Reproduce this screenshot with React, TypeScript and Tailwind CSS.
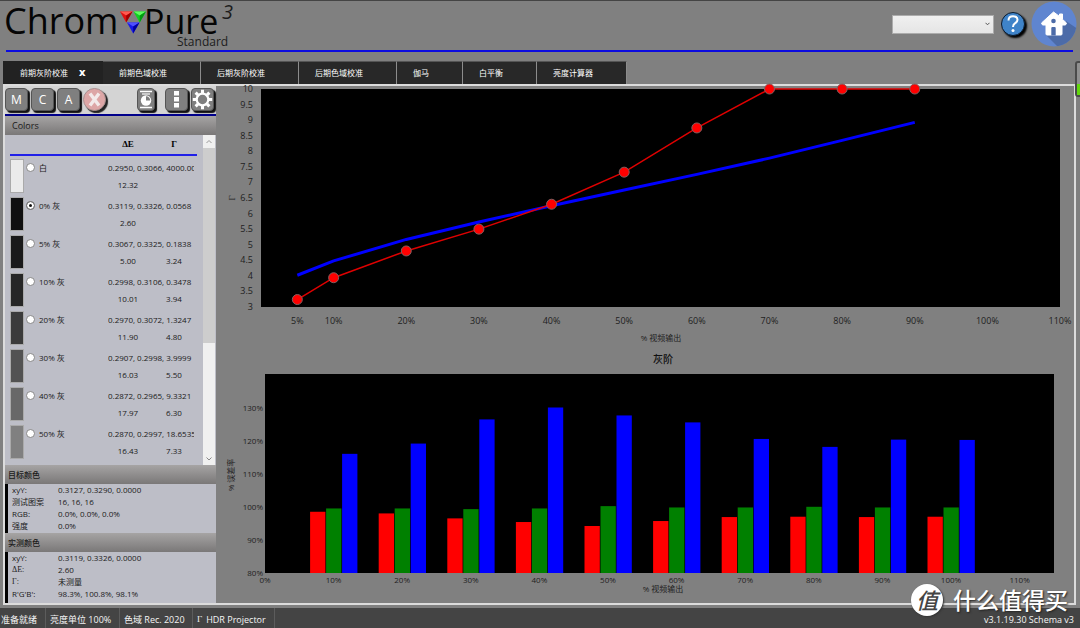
import type { ReactNode } from "react";

const tabs = ["前期色域校准", "后期灰阶校准", "后期色域校准", "伽马", "白平衡", "亮度计算器"];

const readings = [
  { name: "白", swatch: "#ebebeb", xyY: "0.2950, 0.3066, 4000.0000", de: "12.32", gamma: "" },
  { name: "0% 灰", swatch: "#101010", xyY: "0.3119, 0.3326, 0.0568", de: "2.60", gamma: "" },
  { name: "5% 灰", swatch: "#1a1a1a", xyY: "0.3067, 0.3325, 0.1838", de: "5.00", gamma: "3.24" },
  { name: "10% 灰", swatch: "#262626", xyY: "0.2998, 0.3106, 0.3478", de: "10.01", gamma: "3.94" },
  { name: "20% 灰", swatch: "#3b3b3b", xyY: "0.2970, 0.3072, 1.3247", de: "11.90", gamma: "4.80" },
  { name: "30% 灰", swatch: "#525252", xyY: "0.2907, 0.2998, 3.9999", de: "16.03", gamma: "5.50" },
  { name: "40% 灰", swatch: "#686868", xyY: "0.2872, 0.2965, 9.3321", de: "17.97", gamma: "6.30" },
  { name: "50% 灰", swatch: "#808080", xyY: "0.2870, 0.2997, 18.6535", de: "16.43", gamma: "7.33" },
];

const target: [string, string][] = [
  ["xyY:", "0.3127, 0.3290, 0.0000"],
  ["测试图案", "16, 16, 16"],
  ["RGB:", "0.0%, 0.0%, 0.0%"],
  ["强度", "0.0%"],
];

const measured: [string, string][] = [
  ["xyY:", "0.3119, 0.3326, 0.0000"],
  ["ΔE:", "2.60"],
  ["Γ:", "未测量"],
  ["R'G'B':", "98.3%, 100.8%, 98.1%"],
];

const levels = [5, 10, 20, 30, 40, 50, 60, 70, 80, 90];
const measuredGamma = [3.24, 3.94, 4.8, 5.5, 6.3, 7.33, 8.75, 10, 10, 10];
const targetGamma = [4.02, 4.48, 5.17, 5.73, 6.25, 6.76, 7.26, 7.78, 8.35, 8.93];

const balance = [
  [98.5, 99.5, 116],
  [98, 99.5, 119.1],
  [96.5, 99.3, 126.4],
  [95.4, 99.5, 130],
  [94.2, 100.2, 127.6],
  [95.7, 99.8, 125.5],
  [96.9, 99.8, 120.5],
  [97, 100, 118.1],
  [96.9, 99.8, 120.3],
  [97, 99.8, 120.2],
];

const barColors = ["#ff0000", "#008000", "#0000ff"];

function Logo() {
  return (
    <svg className="overflow-visible" width="240" height="49" viewBox="0 0 240 49" role="img" aria-label="ChromaPure 3 Standard">
      <g className="font-['Open_Sans',sans-serif]" fill="#050505">
        <text x="2" y="33" fontSize="36">Chrom</text>
        <text x="142" y="33" fontSize="34">Pure</text>
        <text x="220" y="18" fontSize="20" fontStyle="italic" fill="#1c1c1c">3</text>
        <text x="175" y="45" fontSize="12" fill="#1c1c1c">Standard</text>
      </g>
      <path d="M118 10.500h12.500l-6.300 11z" fill="#e01010" />
      <path d="M118 10.500h12.500l-6.300 4z" fill="#ff5a50" />
      <path d="M130.500 10.500l-6.300 11v-7z" fill="#a00000" />
      <path d="M131.500 10.500h12.500l-6.300 11z" fill="#10d020" />
      <path d="M131.500 10.500h12.500l-6.300 4z" fill="#60ff60" />
      <path d="M144 10.500l-6.300 11v-7z" fill="#009a10" />
      <path d="M125 21.500h12.500l-6.300 11z" fill="#1818e8" />
      <path d="M125 21.500h12.500l-6.300 4z" fill="#5050ff" />
      <path d="M137.500 21.500l-6.300 11v-7z" fill="#0000a0" />
    </svg>
  );
}

function HomeIcon() {
  return (
    <svg width="46" height="46" viewBox="0 0 46 46" aria-hidden="true">
      <defs>
        <clipPath id="home-disc">
          <circle cx="23" cy="23" r="22.500" />
        </clipPath>
      </defs>
      <circle cx="23" cy="23" r="22.500" fill="#5f85d0" />
      <path clipPath="url(#home-disc)" d="M15 34l14 14h22V31L35 20z" fill="#4c6ba8" />
      <path
        d="M22.500 11L10.500 22l1 2H15v9q0 1 1 1h14q1 0 1-1v-9h3.500l1-2-4-3.600v-5.400h-3v2.400z"
        fill="#fff"
        stroke="#fff"
        strokeLinejoin="round"
      />
      <circle cx="22.500" cy="20" r="2.300" fill="#4c6ba8" />
      <path d="M20.300 34.500V27q0-1 1-1h2.400q1 0 1 1v7.500z" fill="#4c6ba8" />
    </svg>
  );
}

function Header() {
  return (
    <header className="mr-[7px] ml-[6px] flex h-[51px] items-start justify-between border-b-2 border-[#0b0be0]">
      <div className="-ml-1">
        <Logo />
      </div>
      <div className="-mr-1 flex items-center">
        <div className="relative mr-[7px]">
          <select
            aria-label="Device"
            className="block h-[19px] w-[102px] appearance-none border border-[#acacac] bg-linear-to-b from-[#f0f0f0] to-[#e5e5e5] text-[8px]"
          >
            <option></option>
          </select>
          <svg className="pointer-events-none absolute top-[7px] right-1" width="5" height="4" viewBox="0 0 5 4" aria-hidden="true">
            <path d="M.5.800l2 2 2-2" fill="none" stroke="#555" />
          </svg>
        </div>
        <button
          aria-label="Help"
          className="mr-[6px] flex size-6 items-center justify-center rounded-full border border-[#0d1a2a] bg-[#3f83c8] shadow-[2px_2px_2px_#000]"
        >
          <svg width="22" height="22" viewBox="0 0 22 22" aria-hidden="true">
            <path d="M6.500 7.500q0-4.300 4.500-4.300t4.500 3.600q0 2-2.300 3.400-2.200 1.300-2.200 3.800" fill="none" stroke="#fff" strokeWidth="2" />
            <circle cx="11" cy="17.500" r="1.500" fill="#fff" />
          </svg>
        </button>
        <button aria-label="Home">
          <HomeIcon />
        </button>
      </div>
    </header>
  );
}

function Tabs() {
  return (
    <nav role="tablist" className="mt-[9px] ml-[3px] flex h-[23px] text-[8px] text-white">
      <button role="tab" aria-selected="true" className="flex w-[100px] items-center bg-[#222] pl-[17px] text-left">
        前期灰阶校准
        <span className="ml-[11px] text-[9px] font-extrabold">X</span>
      </button>
      {tabs.map((tab) => (
        <button
          key={tab}
          role="tab"
          aria-selected="false"
          className="border-t border-r border-t-[#555] border-r-[#8c8c8c] bg-[#282828] pr-[33px] pl-4 text-left"
        >
          {tab}
        </button>
      ))}
    </nav>
  );
}

function ToolButton({ label, className = "w-[23px]", children }: { label: string; className?: string; children: ReactNode }) {
  return (
    <button
      aria-label={label}
      className={`flex h-[23px] items-center justify-center rounded-[4px] border border-[#555] bg-[#7f7f7f] text-[12px] font-medium text-white shadow-[2px_2px_1px_#111] ${className}`}
    >
      {children}
    </button>
  );
}

function Toolbar() {
  return (
    <div className="flex h-[30px] items-start gap-[3px] border-b-2 border-[#00008b] bg-[#d4d4d4] pt-[2px]">
      <ToolButton label="Manual">M</ToolButton>
      <ToolButton label="Continuous">C</ToolButton>
      <ToolButton label="Auto">A</ToolButton>
      <button
        aria-label="Cancel"
        className="flex size-[23px] items-center justify-center rounded-full border border-[#a89090] bg-[#dda6a6] shadow-[2px_2px_1px_#222]"
      >
        <svg width="15" height="15" viewBox="0 0 15 15" aria-hidden="true">
          <path d="M3 1.500l9 12M12 1.500l-9 12" stroke="#f3eaea" strokeWidth="3.400" />
        </svg>
      </button>
      <div className="flex-1" />
      <ToolButton label="Report" className="mr-[7px] w-[18px]">
        <svg width="16" height="21" viewBox="0 0 16 21" aria-hidden="true">
          <path d="M2 2.500h12M2 18.500h12" stroke="#fff" strokeWidth="1.600" />
          <path d="M4 5h8" stroke="#fff" strokeWidth="1.200" />
          <circle cx="8" cy="11.500" r="5.200" fill="#fff" />
          <path d="M8 11.500V7.300a4.200 4.200 0 0 1 4.200 4.200z" fill="#7f7f7f" />
        </svg>
      </ToolButton>
      <ToolButton label="Options">
        <svg width="5" height="17" viewBox="0 0 5 17" fill="#fff" aria-hidden="true">
          <rect width="5" height="4.500" />
          <rect y="6" width="5" height="4.500" />
          <rect y="12" width="5" height="4.500" />
        </svg>
      </ToolButton>
      <ToolButton label="Settings" className="mr-[2px] w-[23px]">
        <svg width="21" height="21" viewBox="0 0 21 21" fill="none" stroke="#fff" aria-hidden="true">
          <circle cx="10.500" cy="10.500" r="5.800" strokeWidth="2.200" />
          <path
            d="M10.500 4V.800M10.500 17v3.200M4 10.500H.800M17 10.500h3.200M5.900 5.900L3.600 3.600M15.100 15.100l2.300 2.300M15.100 5.900l2.300-2.300M5.900 15.100l-2.300 2.300"
            strokeWidth="3"
          />
        </svg>
      </ToolButton>
    </div>
  );
}

function SectionTitle({ className, children }: { className: string; children: ReactNode }) {
  return (
    <h2 className={`flex h-[19px] items-center bg-linear-to-b from-[#a6a4a4] to-[#7a7878] text-[#1a1a1a] ${className}`}>
      {children}
    </h2>
  );
}

function ReadingsTable() {
  return (
    <div className="flex h-[330px] justify-between bg-[#bdbec7]">
      <table className="ml-[5px] h-fit w-[187px] table-fixed border-collapse text-[8px] text-[#1a1a1a]">
        <colgroup>
          <col className="w-4" />
          <col />
          <col className="w-[46px]" />
          <col className="w-[46px]" />
        </colgroup>
        <thead className="font-['Liberation_Serif',serif] text-[9px] text-black">
          <tr className="h-[20px] border-b-2 border-[#2020e8]">
            <th colSpan={2}></th>
            <th>ΔE</th>
            <th>Γ</th>
          </tr>
          <tr className="h-[3px]"></tr>
        </thead>
        {readings.map((r, i) => (
          <tbody key={r.name}>
            <tr className="h-[19px]">
              <td rowSpan={2} className="pt-px align-top">
                <div className="h-[34px] w-[14px] border border-[#aaa]" style={{ backgroundColor: r.swatch }} />
              </td>
              <td>
                <label className="flex items-center gap-1 leading-[19px]">
                  <input
                    type="radio"
                    name="reading"
                    defaultChecked={i === 1}
                    className="size-[9px] appearance-none rounded-full border border-[#888] bg-white checked:bg-[#111] checked:inset-ring-2 checked:inset-ring-white"
                  />
                  {r.name}
                </label>
              </td>
              <td colSpan={2}>
                <div className="ml-[3px] w-[86px] overflow-hidden leading-[19px] whitespace-nowrap">{r.xyY}</div>
              </td>
            </tr>
            <tr className="h-[19px] text-center align-top leading-4">
              <td></td>
              <td>{r.de}</td>
              <td>{r.gamma}</td>
            </tr>
          </tbody>
        ))}
      </table>
      <div className="mr-px flex w-3 flex-col bg-[#f0f0f0]" aria-hidden="true">
        <svg width="12" height="13" viewBox="0 0 12 13" fill="none" stroke="#999">
          <path d="M3.500 8l2.500-2.500L8.500 8" />
        </svg>
        <div className="h-[195px] bg-[#cdcdcd]" />
        <div className="flex-1" />
        <svg width="12" height="13" viewBox="0 0 12 13" fill="none" stroke="#888">
          <path d="M3.500 5.500L6 8l2.500-2.500" />
        </svg>
      </div>
    </div>
  );
}

function InfoList({ rows }: { rows: [string, string][] }) {
  return (
    <dl className="grid min-h-[49px] grid-cols-[46px_1fr] content-start border-l-[3px] border-black bg-[#bdbec7] pl-1 text-[8px] leading-3 text-[#1a1a1a] last:grow">
      {rows.map(([name, value]) => (
        <div key={name} className="contents">
          <dt className={/^[ΔΓ]/.test(name) ? "font-['Liberation_Serif',serif]" : ""}>{name}</dt>
          <dd>{value}</dd>
        </div>
      ))}
    </dl>
  );
}

function GammaChart() {
  const x = (level: number) => 45 + level * 7.264;
  const y = (gamma: number) => 221 - (gamma - 3) * 31.14;
  const line = (values: number[]) => values.map((v, i) => `${x(levels[i])},${y(v)}`).join(" ");

  return (
    <svg className="block w-full overflow-visible" viewBox="0 0 858 262" fontSize="9" fill="#1e1e1e">
      <rect x="45" y="3" width="799" height="218" fill="#000" />
      {Array.from({ length: 15 }, (_, i) => 3 + i / 2).map((g) => (
        <text key={g} x="37" y={y(g) + 3} textAnchor="end">
          {g}
        </text>
      ))}
      {[...levels, 100, 110].map((level) => (
        <text key={level} x={x(level)} y="238" textAnchor="middle">
          {level}%
        </text>
      ))}
      <text x="445" y="255" fontSize="8" textAnchor="middle">% 视频输出</text>
      <text transform="translate(19 112) rotate(-90)" textAnchor="middle" className="font-['Liberation_Serif',serif]">Γ</text>
      <polyline points={line(targetGamma)} fill="none" stroke="#0000ff" strokeWidth="3" />
      <polyline points={line(measuredGamma)} fill="none" stroke="#e00000" strokeWidth="1.500" />
      {measuredGamma.map((g, i) => (
        <circle key={levels[i]} cx={x(levels[i])} cy={y(g)} r="5" fill="#ff0000" stroke="#806060" />
      ))}
    </svg>
  );
}

function BalanceChart() {
  const x = (level: number) => 49 + level * 6.86;
  const y = (value: number) => 203 - (value - 80) * 3.31;

  return (
    <svg className="block w-full" viewBox="0 0 858 233" fontSize="8" fill="#1e1e1e">
      <rect x="49" y="4" width="789" height="199" fill="#000" />
      {[80, 90, 100, 110, 120, 130].map((v) => (
        <text key={v} x="47" y={y(v) + 3} textAnchor="end">
          {v}%
        </text>
      ))}
      {Array.from({ length: 12 }, (_, i) => i * 10).map((level) => (
        <text key={level} x={x(level)} y="213" textAnchor="middle">
          {level}%
        </text>
      ))}
      <text x="447" y="222" textAnchor="middle">% 视频输出</text>
      <text transform="translate(18 105) rotate(-90)" textAnchor="middle">% 误差率</text>
      {balance.map((group, i) =>
        group.map((v, j) => (
          <rect
            key={`${i}-${j}`}
            x={x((i + 1) * 10) - 23.5 + j * 16}
            y={y(v)}
            width="15.300"
            height={203 - y(v)}
            fill={barColors[j]}
          />
        ))
      )}
    </svg>
  );
}

function StatusBar() {
  return (
    <footer className="mt-[3px] flex h-[20px] items-center bg-[#444] text-[9px] whitespace-nowrap text-[#f4f4f4]">
      <span className="flex h-full w-[46px] items-center border-r border-[#5c5c5c] pt-1 pl-px">准备就绪</span>
      <span className="flex h-full w-[74px] items-center border-r border-[#5c5c5c] pt-1 pl-1">亮度单位 100%</span>
      <span className="flex h-full w-[73px] items-center border-r border-[#5c5c5c] pt-1 pl-1">色域 Rec. 2020</span>
      <span className="flex h-full w-[82px] items-center gap-1 border-r border-[#5c5c5c] pt-1 pl-1">
        <span className="font-['Liberation_Serif',serif]">Γ</span>HDR Projector
      </span>
      <span className="ml-auto pt-1 pr-[6px]">v3.1.19.30 Schema v3</span>
    </footer>
  );
}

export default function App() {
  return (
    <div className="relative flex min-h-screen flex-col overflow-hidden border-t border-[#444] bg-[#808080] font-['Open_Sans','Noto_Sans_CJK_SC',sans-serif]">
      <Header />
      <Tabs />
      <main className="mr-[4px] ml-[3px] flex flex-1 border-2 border-[#dcdcdc]">
        <aside className="flex w-[211px] shrink-0 flex-col">
          <Toolbar />
          <SectionTitle className="pl-[7px] text-[9px]">Colors</SectionTitle>
          <ReadingsTable />
          <SectionTitle className="pl-[3px] text-[8px] font-medium">目标颜色</SectionTitle>
          <InfoList rows={target} />
          <SectionTitle className="pl-[3px] text-[8px] font-medium">实测颜色</SectionTitle>
          <InfoList rows={measured} />
        </aside>
        <section className="min-w-0 flex-1">
          <GammaChart />
          <h2 className="pl-9 text-center text-[10px] leading-[22px] font-medium text-[#111]">灰阶</h2>
          <BalanceChart />
        </section>
      </main>
      <StatusBar />

      {/* level meter cut off by the window edge */}
      <div className="absolute top-[60px] -right-1 flex h-[36px] w-[9px] flex-col justify-end rounded-[3px] border-2 border-[#4a4a4a] bg-[#909090]">
        <div className="h-[11px] bg-[#62d80c]" />
      </div>

      <div className="absolute right-3 bottom-3 flex items-center gap-[10px] text-white">
        <span className="flex size-8 items-center justify-center rounded-full bg-white text-[22px] leading-8 font-medium text-[#444] italic shadow-[1px_1px_2px_#333]">
          值
        </span>
        <span className="text-[23px] leading-8 font-medium text-shadow-[1px_1px_2px_#222]">什么值得买</span>
      </div>
    </div>
  );
}
